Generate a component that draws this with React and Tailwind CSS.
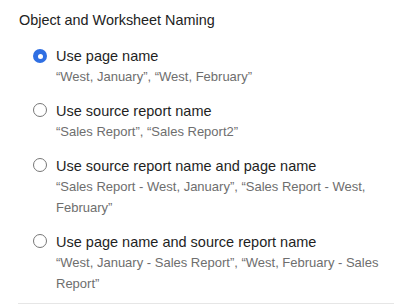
import React from "react";

const options = [
  { label: "Use page name", desc: "“West, January”, “West, February”", checked: true },
  { label: "Use source report name", desc: "“Sales Report”, “Sales Report2”" },
  { label: "Use source report name and page name", desc: "“Sales Report - West, January”, “Sales Report - West, February”" },
  { label: "Use page name and source report name", desc: "“West, January - Sales Report”, “West, February - Sales Report”" },
];

function Radio({ checked }) {
  if (checked) {
    return (
      <span className="mt-[3px] flex h-[14px] w-[14px] shrink-0 items-center justify-center rounded-full bg-[#2f6fe3]">
        <span className="h-[5px] w-[5px] rounded-full bg-white" />
      </span>
    );
  }
  return <span className="mt-[2px] h-[14px] w-[14px] shrink-0 rounded-full border border-[#777] bg-white" />;
}

export default function App() {
  return (
    <div className="h-[306px] w-[412px] bg-white px-[18px] pt-[10px]" style={{ fontFamily: '"Liberation Sans", Arial, sans-serif' }}>
      <div className="pl-px text-[14.4px] leading-[20px] text-[#222]">Object and Worksheet Naming</div>
      <div className="mt-[16px] flex flex-col gap-[14px] pl-[15px]">
        {options.map((o) => (
          <div key={o.label} className="flex gap-[9px]">
            <Radio checked={o.checked} />
            <div className="flex flex-col pr-[8px]">
              <div className="text-[14.5px] leading-[20px] text-[#1f1f1f]">{o.label}</div>
              <div className="text-[13px] leading-[21px] text-[#6e6e6e]">{o.desc}</div>
            </div>
          </div>
        ))}
      </div>
      <div className="mt-[9px] h-px bg-[#e6e6e6]" />
    </div>
  );
}
